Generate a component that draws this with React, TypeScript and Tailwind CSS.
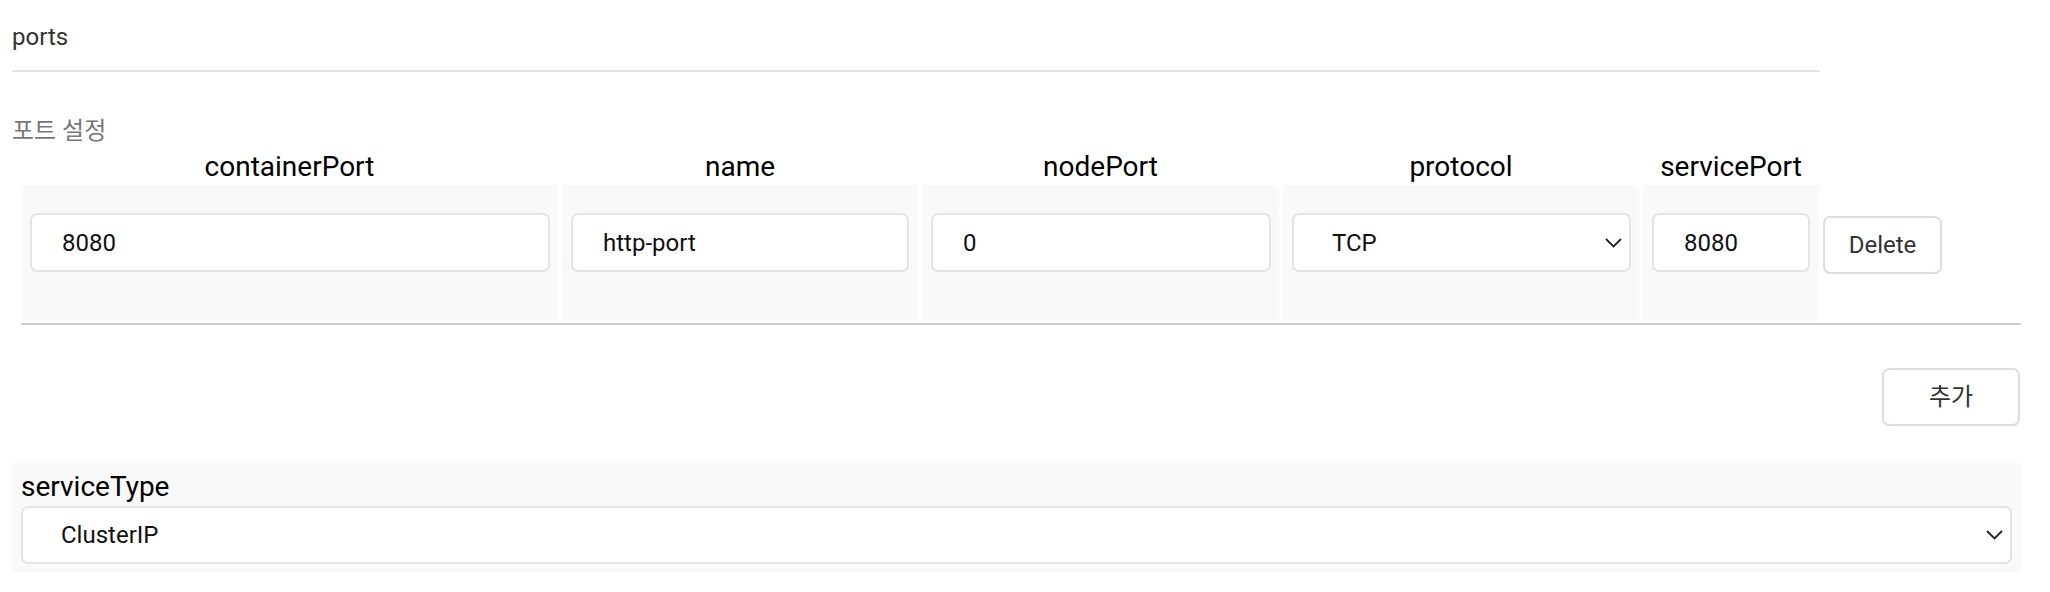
import React from 'react';

function Chevron() {
  return (
    <svg
      className="pointer-events-none absolute right-[9px] top-1/2 -translate-y-1/2"
      width="17"
      height="10"
      viewBox="0 0 17 10"
      fill="none"
    >
      <polyline points="1,1 8.5,8.5 16,1" stroke="#222" strokeWidth="1.8" />
    </svg>
  );
}

function TextField({ value }: { value: string }) {
  return (
    <input
      defaultValue={value}
      className="h-[59px] w-full rounded-[7px] border-2 border-[#e1e4e9] bg-white pl-[30px] text-[24px] text-[#111] outline-none"
    />
  );
}

function SelectField({ value, options, height }: { value: string; options: string[]; height: string }) {
  return (
    <div className="relative w-full">
      <select
        defaultValue={value}
        className={`${height} w-full appearance-none rounded-[7px] border-2 border-[#e1e4e9] bg-white pl-[38px] text-[24px] text-[#111] outline-none`}
      >
        {options.map((o) => (
          <option key={o}>{o}</option>
        ))}
      </select>
      <Chevron />
    </div>
  );
}

const headers = ['containerPort', 'name', 'nodePort', 'protocol', 'servicePort'];

export default function App() {
  return (
    <div className="min-h-[592px] w-[2050px] bg-white pl-[12px] pt-[23px] font-['Roboto','Noto_Sans_CJK_KR',sans-serif]">
      {/* section title */}
      <div className="w-[1808px] border-b-2 border-[#e3e3e3] pb-[19px]">
        <div className="text-[24px] leading-[28px] text-[#333]">ports</div>
      </div>

      <div className="mt-[45px] text-[24px] leading-[28px] text-[#777]">포트 설정</div>

      {/* ports table */}
      <div className="ml-[9px] mt-[5px] w-[2000px] border-b-2 border-[#cccccc] pb-[2px]">
        <div className="grid grid-cols-[537px_356px_357px_356px_176px_1fr] gap-x-[4px] gap-y-[2px]">
          {headers.map((h) => (
            <div key={h} className="text-center text-[28px] leading-[33px] text-black">
              {h}
            </div>
          ))}
          <div />

          <div className="bg-[#f9f9f9] pb-[49px] pl-[9px] pr-[8px] pt-[28px]">
            <TextField value="8080" />
          </div>
          <div className="bg-[#f9f9f9] pb-[49px] pl-[9px] pr-[9px] pt-[28px]">
            <TextField value="http-port" />
          </div>
          <div className="bg-[#f9f9f9] pb-[49px] pl-[9px] pr-[8px] pt-[28px]">
            <TextField value="0" />
          </div>
          <div className="bg-[#f9f9f9] pb-[49px] pl-[9px] pr-[8px] pt-[28px]">
            <SelectField value="TCP" options={['TCP', 'UDP', 'SCTP']} height="h-[59px]" />
          </div>
          <div className="bg-[#f9f9f9] pb-[49px] pl-[9px] pr-[9px] pt-[28px]">
            <TextField value="8080" />
          </div>
          <div className="pt-[31px]">
            <button className="h-[58px] w-[119px] rounded-[7px] border-2 border-[#dddddd] bg-white text-[24px] text-[#333]">
              Delete
            </button>
          </div>
        </div>
      </div>

      <div className="mt-[43px] flex w-[2009px] justify-end pr-[1px]">
        <button className="h-[58px] w-[138px] rounded-[7px] border-2 border-[#dddddd] bg-white text-[24px] text-[#333]">
          추가
        </button>
      </div>

      {/* service type */}
      <div className="mt-[37px] w-[2009px] bg-[#f9f9f9] px-[9px] pb-[8px] pt-[7px]">
        <div className="text-[28px] leading-[33px] text-black">serviceType</div>
        <div className="mt-[3px]">
          <SelectField value="ClusterIP" options={['ClusterIP', 'NodePort', 'LoadBalancer']} height="h-[58px]" />
        </div>
      </div>
    </div>
  );
}
